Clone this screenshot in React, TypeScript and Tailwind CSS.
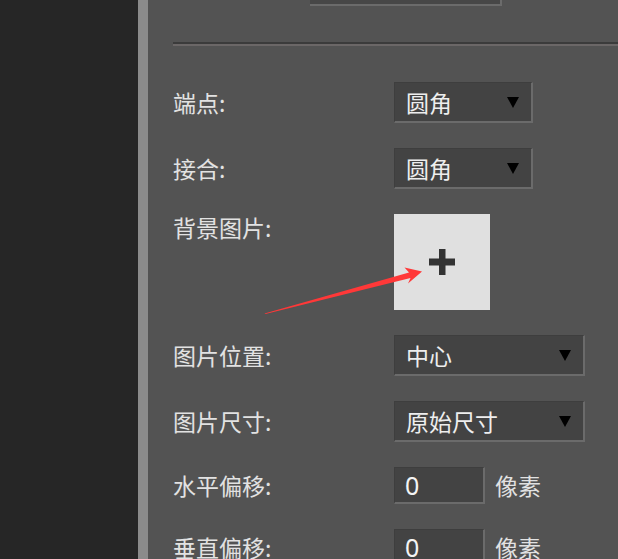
import React from "react";

const CJK = "font-['Noto_Sans_CJK_SC','Noto_Sans',sans-serif]";

function Caret() {
  return (
    <svg width="12" height="11" viewBox="0 0 12 11" className="shrink-0">
      <polygon points="0,0 12,0 6,11" fill="#000" />
    </svg>
  );
}

function Label({ text }: { text: string }) {
  return (
    <div className={`w-[221px] shrink-0 text-[23px] leading-none text-[#e2e2e2] ${CJK}`}>
      {text}
    </div>
  );
}

function Select({ value, width }: { value: string; width: string }) {
  return (
    <div
      className={`${width} flex h-[41px] items-center justify-between border-t border-l border-[#3e3e3e] border-r-2 border-b-2 border-r-[#6b6b6b] border-b-[#6b6b6b] bg-[#434343] pl-[11px] pr-[12px]`}
    >
      <span className={`text-[23px] leading-none text-[#eeeeee] ${CJK}`}>{value}</span>
      <Caret />
    </div>
  );
}

function NumberField({ value }: { value: string }) {
  return (
    <div className="flex items-center gap-[10px]">
      <div className="flex h-[37px] w-[91px] items-center border-t border-l border-[#3e3e3e] border-r-2 border-b-2 border-r-[#6b6b6b] border-b-[#6b6b6b] bg-[#434343] pl-[10px]">
        <span className="font-['Noto_Sans',sans-serif] text-[25px] leading-none text-[#f4f4f4]">
          {value}
        </span>
      </div>
      <span className={`text-[23px] leading-none text-[#e2e2e2] ${CJK}`}>像素</span>
    </div>
  );
}

export default function App() {
  return (
    <div className="relative flex h-[559px] w-[618px] overflow-hidden">
      <div className="w-[138px] shrink-0 bg-[#262626]" />
      <div className="w-[10px] shrink-0 bg-[#8b8b8b]" />
      <div className="flex min-w-0 flex-1 flex-col bg-[#535353] pl-[25px]">
        {/* bottom edge of the field above */}
        <div className="ml-[137px] h-[6px] w-[192px] shrink-0 border-r-2 border-b-2 border-[#6b6b6b] bg-[#474747]" />

        <div className="mt-[36px] h-[4px] shrink-0 border-t-2 border-b-2 border-t-[#3b3b3b] border-b-[#6b6767]" />

        <div className="mt-[36px] flex flex-col gap-[25px]">
          <div className="flex items-center">
            <Label text="端点:" />
            <Select value="圆角" width="w-[139px]" />
          </div>
          <div className="flex items-center">
            <Label text="接合:" />
            <Select value="圆角" width="w-[139px]" />
          </div>
          <div className="flex items-start">
            <div className="pt-[2px]">
              <Label text="背景图片:" />
            </div>
            <button className="flex h-[96px] w-[96px] items-center justify-center bg-[#e0e0e0]">
              <svg width="26" height="26" viewBox="0 0 26 26">
                <rect x="10" y="0" width="6.5" height="26" fill="#333" />
                <rect x="0" y="9.5" width="26" height="7" fill="#333" />
              </svg>
            </button>
          </div>
          <div className="flex items-center">
            <Label text="图片位置:" />
            <Select value="中心" width="w-[191px]" />
          </div>
          <div className="flex items-center">
            <Label text="图片尺寸:" />
            <Select value="原始尺寸" width="w-[191px]" />
          </div>
          <div className="flex items-center">
            <Label text="水平偏移:" />
            <NumberField value="0" />
          </div>
          <div className="flex items-center">
            <Label text="垂直偏移:" />
            <NumberField value="0" />
          </div>
        </div>
      </div>

      {/* annotation arrow */}
      <svg
        className="pointer-events-none absolute left-0 top-0"
        width="618"
        height="559"
        viewBox="0 0 618 559"
      >
        <polygon
          points="264.5,313.5 409,272.5 404.5,267.5 422,271.5 408,283.5 410.5,278 265.5,314"
          fill="#ff3838"
        />
      </svg>
    </div>
  );
}
